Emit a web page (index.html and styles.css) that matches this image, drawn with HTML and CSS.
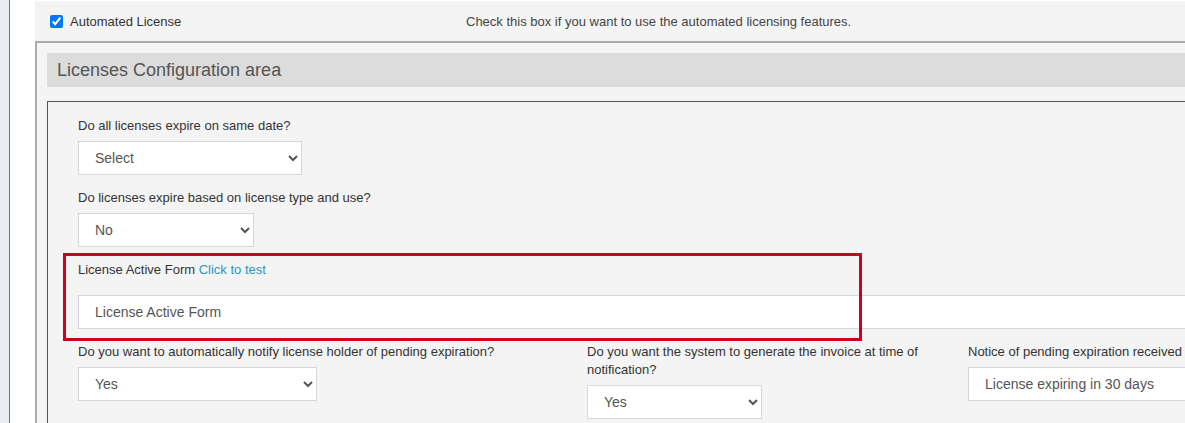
FILE: index.html
```html
<!DOCTYPE html>
<html lang="en">
<head>
<meta charset="utf-8">
<title>Licenses Configuration</title>
<link rel="stylesheet" href="styles.css">
</head>
<body>
<div class="layout">
  <aside class="sidebar"></aside>
  <div class="gutter"></div>
  <main class="content">
    <div class="auto-row">
      <label class="auto-check"><input type="checkbox" class="checkbox" checked> Automated License</label>
      <span class="auto-help">Check this box if you want to use the automated licensing features.</span>
    </div>
    <section class="config">
      <h2 class="config-title">Licenses Configuration area</h2>
      <div class="inner">
        <div class="form-group">
          <label class="field-label">Do all licenses expire on same date?</label>
          <select class="field-select w-224"><option>Select</option></select>
        </div>
        <div class="form-group">
          <label class="field-label">Do licenses expire based on license type and use?</label>
          <select class="field-select w-176"><option>No</option></select>
        </div>
        <div class="form-group active-form">
          <label class="field-label active-label">License Active Form <a class="test-link" href="#">Click to test</a></label>
          <input class="field-input" type="text" value="License Active Form">
          <div class="highlight"></div>
        </div>
        <div class="row3">
          <div class="col">
            <label class="field-label">Do you want to automatically notify license holder of pending expiration?</label>
            <select class="field-select w-239"><option>Yes</option></select>
          </div>
          <div class="col">
            <label class="field-label">Do you want the system to generate the invoice at time of notification?</label>
            <select class="field-select w-175"><option>Yes</option></select>
          </div>
          <div class="col">
            <label class="field-label nowrap">Notice of pending expiration received</label>
            <select class="field-select w-260"><option>License expiring in 30 days</option></select>
          </div>
        </div>
      </div>
    </section>
  </main>
</div>
</body>
</html>
```
FILE: styles.css
```css
html, body {
  margin: 0;
  padding: 0;
  overflow: hidden;
  height: 100%;
  background: #ffffff;
  font-family: "Liberation Sans", Arial, sans-serif;
}

.layout {
  display: flex;
  width: 1500px;
  min-height: 100%;
}

.sidebar {
  width: 9px;
  flex: none;
  background: #eaedf2;
  border-right: 1px solid #3b82c4;
}

.gutter {
  width: 25px;
  flex: none;
  background: #ffffff;
}

.content {
  flex: 1;
  padding-top: 1px;
  background: #ffffff;
}

.auto-row {
  height: 40px;
  display: flex;
  align-items: center;
  background: #f4f4f4;
  padding-left: 15px;
  font-size: 13px;
  color: #333;
}

.auto-check {
  width: 416px;
  display: flex;
  align-items: center;
  gap: 7px;
}

.checkbox {
  width: 13px;
  height: 13px;
  margin: 0;
}

.auto-help {
  color: #444;
}

.config {
  border-top: 2px solid #aaaaaa;
  border-left: 2px solid #aaaaaa;
  background: #f4f4f4;
  padding: 10px 0 0 10px;
  min-height: 500px;
}

.config-title {
  margin: 0 0 14px 0;
  height: 34px;
  line-height: 34px;
  padding-left: 10px;
  background: #dcdcdc;
  color: #555;
  font-size: 18px;
  font-weight: normal;
}

.inner {
  border-top: 1px solid #555;
  border-left: 1px solid #555;
  padding: 15px 0 0 30px;
  min-height: 400px;
}

.form-group {
  margin-bottom: 14px;
}

.field-label {
  display: block;
  font-size: 13px;
  line-height: 18px;
  color: #333;
  margin-bottom: 6px;
}

.nowrap {
  white-space: nowrap;
}

.active-label {
  margin-bottom: 16px;
}

.test-link {
  color: #2b94bf;
  text-decoration: none;
}

.field-select,
.field-input {
  display: block;
  box-sizing: border-box;
  height: 34px;
  margin: 0;
  border: 1px solid #d4d7dd;
  border-radius: 0;
  background: #ffffff;
  font-family: "Liberation Sans", Arial, sans-serif;
  font-size: 14px;
  color: #555;
}

.field-select {
  padding: 0 0 0 12px;
}

.field-input {
  width: 1200px;
  padding: 0 16px;
  outline: none;
}

.w-224 { width: 224px; }
.w-176 { width: 176px; }
.w-239 { width: 239px; }
.w-175 { width: 175px; }
.w-260 { width: 260px; }

.active-form {
  position: relative;
}

.highlight {
  position: absolute;
  left: -15px;
  top: -8px;
  width: 799px;
  height: 88px;
  box-sizing: border-box;
  border: 3px solid #d0021b;
  pointer-events: none;
}

.row3 {
  display: grid;
  grid-template-columns: 509px 381px 400px;
}

.col {
  padding-right: 30px;
}
```
